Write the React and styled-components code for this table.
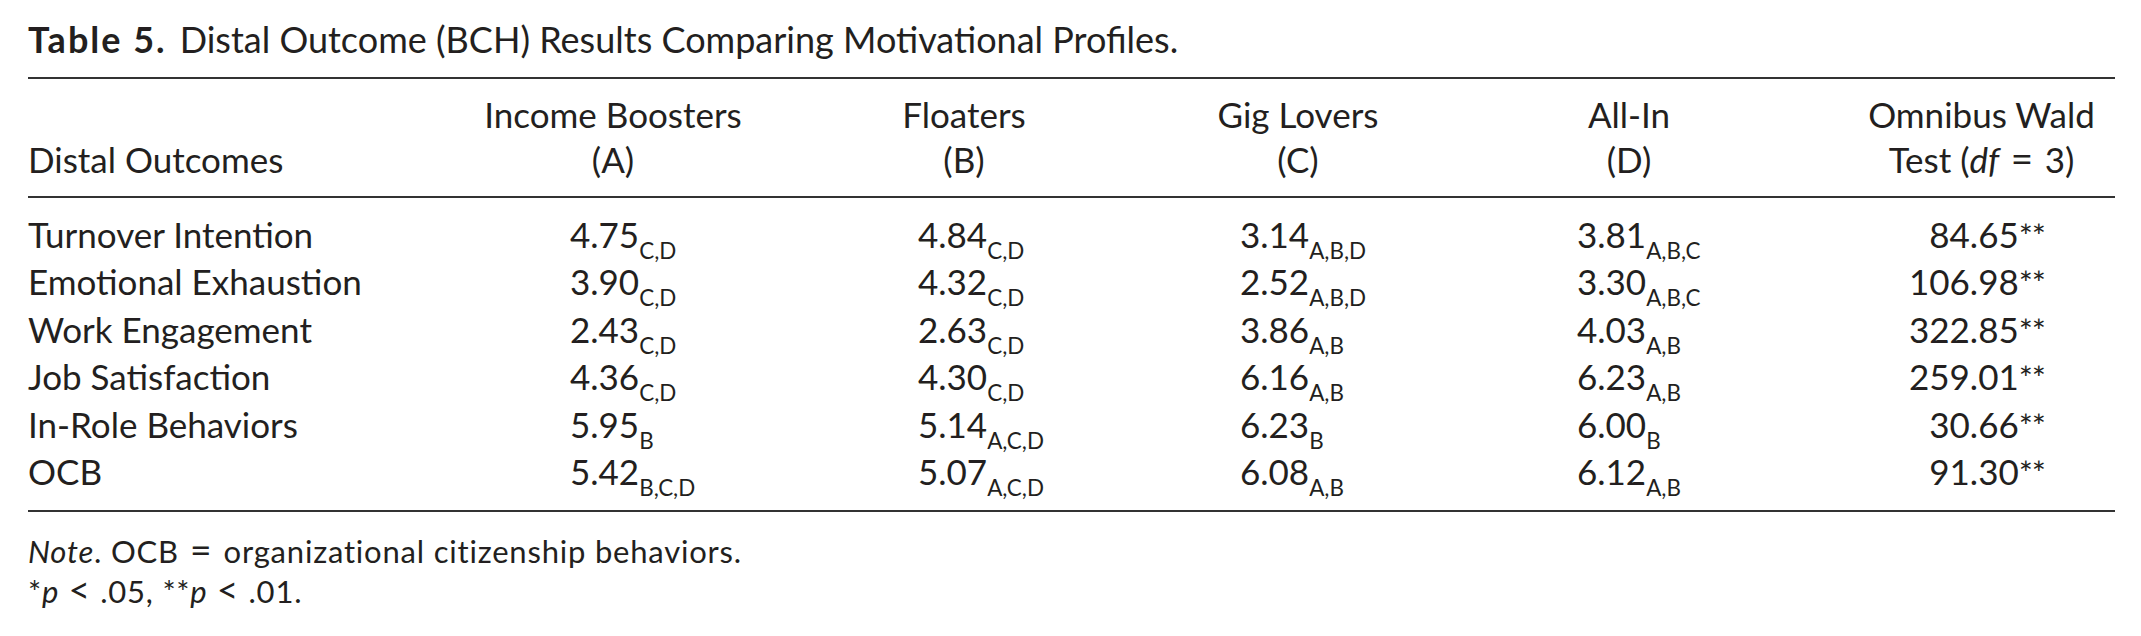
import React from "react";
import styled, { createGlobalStyle } from "styled-components";

const GlobalStyle = createGlobalStyle`
  html, body {
    margin: 0;
    padding: 0;
    background: #ffffff;
  }
  body {
    font-family: Lato, "Open Sans", "DejaVu Sans", sans-serif;
    color: #231f20;
  }
`;

// column geometry taken from the printed table
const groups = [
  { title: "Income Boosters", letter: "(A)", width: 286, pad: 100 },
  { title: "Floaters", letter: "(B)", width: 416, pad: 162 },
  { title: "Gig Lovers", letter: "(C)", width: 252, pad: 68 },
  { title: "All-In", letter: "(D)", width: 410, pad: 153 },
];

const rows = [
  {
    label: "Turnover Intention",
    values: [["4.75", "C,D"], ["4.84", "C,D"], ["3.14", "A,B,D"], ["3.81", "A,B,C"]],
    wald: "84.65",
  },
  {
    label: "Emotional Exhaustion",
    values: [["3.90", "C,D"], ["4.32", "C,D"], ["2.52", "A,B,D"], ["3.30", "A,B,C"]],
    wald: "106.98",
  },
  {
    label: "Work Engagement",
    values: [["2.43", "C,D"], ["2.63", "C,D"], ["3.86", "A,B"], ["4.03", "A,B"]],
    wald: "322.85",
  },
  {
    label: "Job Satisfaction",
    values: [["4.36", "C,D"], ["4.30", "C,D"], ["6.16", "A,B"], ["6.23", "A,B"]],
    wald: "259.01",
  },
  {
    label: "In-Role Behaviors",
    values: [["5.95", "B"], ["5.14", "A,C,D"], ["6.23", "B"], ["6.00", "B"]],
    wald: "30.66",
  },
  {
    label: "OCB",
    values: [["5.42", "B,C,D"], ["5.07", "A,C,D"], ["6.08", "A,B"], ["6.12", "A,B"]],
    wald: "91.30",
  },
];

const gridColumns = `442px ${groups.map((g) => `${g.width}px`).join(" ")} 281px`;

const Page = styled.div`
  width: 2087px;
  padding: 17px 0 0 28px;
`;

const Caption = styled.div`
  font-size: 36px;
  line-height: 44px;
  margin-bottom: 16px;
  white-space: nowrap;
`;

const CaptionLabel = styled.span`
  font-weight: 700;
  letter-spacing: 2px;
  margin-right: 13px;
`;

const Table = styled.div`
  font-size: 35px;
`;

const HeadRow = styled.div`
  display: grid;
  grid-template-columns: ${gridColumns};
  border-top: 2px solid #333;
  border-bottom: 2px solid #333;
  padding: 13px 0 14px;
  line-height: 45px;
`;

const StubHead = styled.div`
  align-self: end;
`;

const ColHead = styled.div`
  text-align: center;
  white-space: nowrap;
  padding-left: ${(p) => p.$shift || 0}px;
`;

const Body = styled.div`
  padding: 12.7px 0 14.3px;
  border-bottom: 2px solid #333;
`;

const Row = styled.div`
  display: grid;
  grid-template-columns: ${gridColumns};
  line-height: 47.5px;
  white-space: nowrap;
`;

const Stub = styled.div``;

const Value = styled.div`
  padding-left: ${(p) => p.$pad}px;
`;

const Sub = styled.span`
  font-size: 0.64em;
  line-height: 0;
  vertical-align: -11px;
`;

const Wald = styled.div`
  text-align: right;
  padding-right: 70px;
`;

const Stars = styled.span`
  font-size: 0.95em;
  line-height: 0;
  letter-spacing: -1px;
`;

// math operators: bigger glyph with the wide spacing of the printed version
const Op = styled.span`
  font-size: ${(p) => p.$size || 1.2}em;
  line-height: 0;
  margin: 0 ${(p) => p.$space || 0.3}em;
`;

const Note = styled.div`
  margin-top: 19.2px;
  font-size: 31px;
  line-height: 40px;
  letter-spacing: 0.8px;
  white-space: nowrap;
`;

export default function App() {
  return (
    <>
      <GlobalStyle />
      <Page>
        <Caption>
          <CaptionLabel>Table 5.</CaptionLabel>
          Distal Outcome (BCH) Results Comparing Motivational Profiles.
        </Caption>
        <Table>
          <HeadRow>
            <StubHead>Distal Outcomes</StubHead>
            {groups.map((g) => (
              <ColHead key={g.letter}>
                {g.title}
                <br />
                {g.letter}
              </ColHead>
            ))}
            <ColHead $shift={14}>
              Omnibus Wald
              <br />
              Test (<i>df</i>
              <Op $size={1.1} $space={0.3}>=</Op>3)
            </ColHead>
          </HeadRow>
          <Body>
            {rows.map((r) => (
              <Row key={r.label}>
                <Stub>{r.label}</Stub>
                {r.values.map(([mean, sub], i) => (
                  <Value key={i} $pad={groups[i].pad}>
                    {mean}
                    <Sub>{sub}</Sub>
                  </Value>
                ))}
                <Wald>
                  {r.wald}
                  <Stars>**</Stars>
                </Wald>
              </Row>
            ))}
          </Body>
        </Table>
        <Note>
          <i>Note</i>. OCB<Op>=</Op>organizational citizenship behaviors.
          <br />*<i>p</i>
          <Op $space={0.25}>&lt;</Op>.05, **<i>p</i>
          <Op $space={0.25}>&lt;</Op>.01.
        </Note>
      </Page>
    </>
  );
}
